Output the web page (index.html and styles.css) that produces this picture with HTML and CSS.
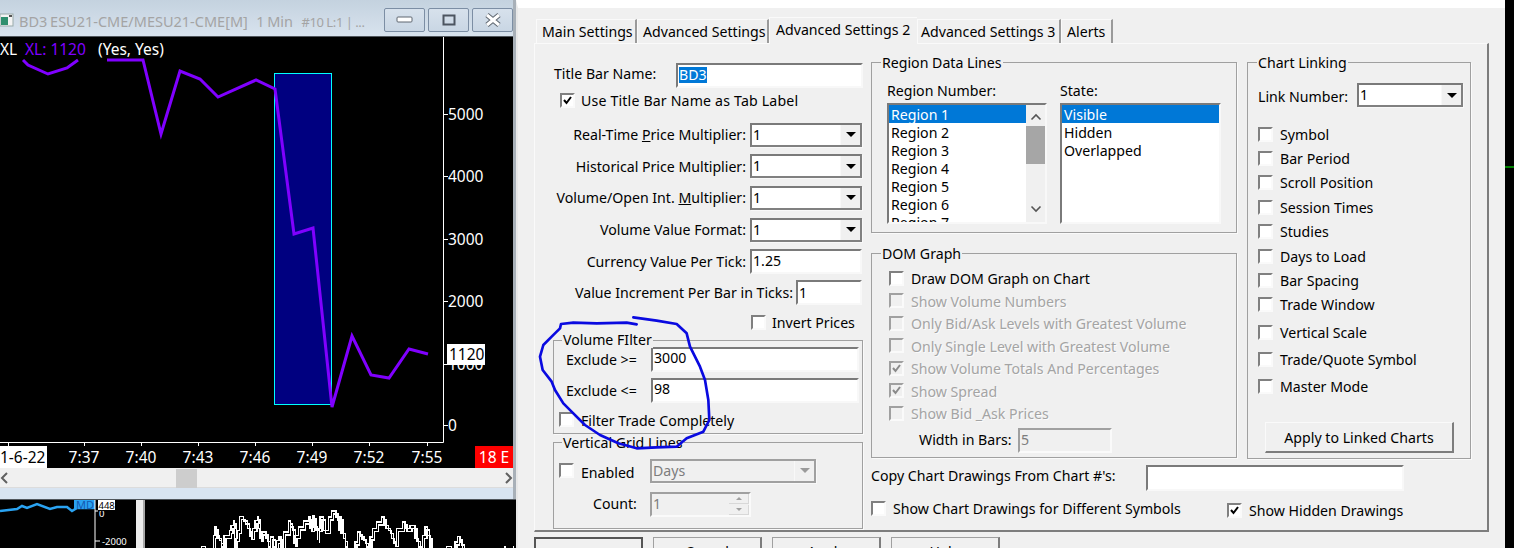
FILE: index.html
```html
<!DOCTYPE html>
<html lang="en">
<head>
<meta charset="utf-8">
<title>Chart Settings</title>
<link rel="stylesheet" href="styles.css">
</head>
<body>
<div class="green-mark"></div>

<section class="win chart-win">
  <header class="titlebar">
    <svg class="app-icon" width="14" height="14" viewBox="0 0 14 14"><rect x="0" y="1" width="13" height="12" fill="#f4f4f4" stroke="#9aa"/><rect x="1" y="4" width="7" height="8" fill="#2f8f6f"/><rect x="9" y="2" width="3" height="2" fill="#555"/></svg>
    <span class="title-text">BD3 ESU21-CME/MESU21-CME[M]&nbsp;&nbsp; 1 Min &nbsp;&nbsp;<span class="title-tail">#10 L:1 | ...</span></span>
    <div class="win-btns">
      <div class="win-btn"><svg width="17" height="8" viewBox="0 0 17 8"><rect x="1" y="1" width="15" height="5" rx="1" fill="#fff" stroke="#5f6770"/></svg></div>
      <div class="win-btn"><svg width="14" height="12" viewBox="0 0 14 12"><rect x="1.5" y="1.5" width="11" height="9" fill="none" stroke="#4c5560" stroke-width="2"/></svg></div>
      <div class="win-btn"><svg width="18" height="14" viewBox="0 0 18 14"><path d="M3 2 L15 12 M15 2 L3 12" stroke="#5f6770" stroke-width="5"/><path d="M3 2 L15 12 M15 2 L3 12" stroke="#fff" stroke-width="3"/></svg></div>
    </div>
  </header>
  <svg class="chart" width="513" height="431" viewBox="0 37 513 431">
    <rect x="274.5" y="73.5" width="57" height="331" fill="#000080" stroke="#00ffff"/>
    <path class="axis" d="M443.5 37 V442.5 H0 M444 114.5 h4 M444 176.5 h4 M444 239.5 h4 M444 301.5 h4 M444 364.5 h4 M444 425.5 h4 M8.5 442 v4 M84.5 442 v4 M141.5 442 v4 M198.5 442 v4 M255.5 442 v4 M312.5 442 v4 M369.5 442 v4 M427.5 442 v4"/>
    <polyline class="plot" points="23,60 28,65 48,74 67,68 78,60"/>
    <polyline class="plot" points="107,60 143,60 161,134 180,71 200,79 218,97 256,80 275,89 294,234 313,228 332,407 352,336 371,375 389,378 409,349 428,354"/>
    <text class="t" x="0" y="55">XL</text>
    <text class="t purple" x="25" y="55">XL: 1120</text>
    <text class="t" x="98" y="55">(Yes, Yes)</text>
    <text class="t" x="448" y="120">5000</text>
    <text class="t" x="448" y="182">4000</text>
    <text class="t" x="448" y="245">3000</text>
    <text class="t" x="448" y="307">2000</text>
    <text class="t" x="448" y="431">0</text>
    <text class="t" x="448" y="370">1000</text>
    <rect x="447" y="344" width="38" height="21" fill="#fff"/>
    <text class="t dark" x="449" y="360">1120</text>
    <rect x="0" y="446" width="47" height="22" fill="#fff"/>
    <text class="t dark" x="0" y="463">1-6-22</text>
    <text class="t" x="84" y="463" text-anchor="middle">7:37</text>
    <text class="t" x="141" y="463" text-anchor="middle">7:40</text>
    <text class="t" x="198" y="463" text-anchor="middle">7:43</text>
    <text class="t" x="255" y="463" text-anchor="middle">7:46</text>
    <text class="t" x="312" y="463" text-anchor="middle">7:49</text>
    <text class="t" x="369" y="463" text-anchor="middle">7:52</text>
    <text class="t" x="427" y="463" text-anchor="middle">7:55</text>
    <rect x="475" y="446" width="38" height="22" fill="#ff0000"/>
    <text class="t" x="494" y="463" text-anchor="middle">18 E</text>
  </svg>
  <div class="hscroll">
    <svg width="10" height="14" viewBox="0 0 10 14"><path d="M7 2 L2 7 L7 12" fill="none" stroke="#606060" stroke-width="2"/></svg>
    <div class="hthumb"></div>
    <svg width="10" height="14" viewBox="0 0 10 14"><path d="M3 2 L8 7 L3 12" fill="none" stroke="#606060" stroke-width="2"/></svg>
  </div>
</section>

<section class="win lower-win">
  <svg width="518" height="49" viewBox="0 0 518 49">
    <rect x="136" y="0" width="9" height="49" fill="#ededed"/>
    <rect x="143" y="0" width="2" height="49" fill="#a8a8a8"/>
    <polyline class="blue-line" points="0,11 17,9 22,6 27,8 37,4 50,9 57,7 67,7 72,11 77,8 94,8"/>
    <rect x="74" y="0" width="21" height="9" fill="#2aa3f2"/>
    <text class="t-sm md" x="76" y="9">MD</text>
    <path class="axis" d="M95 0 V49 M95 41 h5 M95 11 h3"/>
    <text class="t-sm" x="99" y="17">0</text>
    <rect x="98" y="0" width="17" height="10" fill="#fff"/>
    <text class="t-sm dark" x="98.5" y="9">448</text>
    <text class="t-sm" x="102" y="45">-2000</text>
    <g transform="translate(180 -3) scale(.3333)">
      <path id="prices" class="ticks" d="M64 156 V148 H76 V156 M100 156 V115 H105 V90 H108 V115 H118 V130 H125 V150 H132 V115 H148 V100 H153 V85 H160 V72 H163 V150 H165 V125 H172 V100 H178 V58 H190 V72 H203 V95 H210 V118 H218 V95 H225 V70 H232 V60 H235 V95 H240 V125 H245 V105 H258 V125 H265 V150 H272 V120 H280 V150 H290 V130 H297 V118 H303 V150 H310 V105 H325 V72 H332 V90 H340 V140 H345 V115 H355 V90 H370 V72 H385 V60 H390 V95 H398 V55 H402 V90 H412 V130 V95 H420 V60 H430 V100 H445 V60 H455 V42 H468 V60 H475 V100 H480 V58 H485 V100 H490 V125 H497 V150 H503 M525 156 V135 H532 V105 H540 V118 H552 V130 H560 V150 H570 V120 H578 V95 H590 V75 H605 V60 H612 V85 H625 V100 H635 V125 H642 V140 H650 V95 H668 V75 H675 V95 H690 V85 H705 V125 H715 V150 H728 V115 H735 V90 H742 V115 H750 V150 H760 M800 156 V148 H815 V156 M825 156 V135 H833 V118 H840 V135 H848 V156 M975 156 V148 M1000 156 V148"/>
      <use href="#prices" x="6" y="9"/>
    </g>
  </svg>
</section>

<section class="win dialog">
  <nav class="tabs">
    <div class="tab t-main">Main Settings</div>
    <div class="tab t-adv">Advanced Settings</div>
    <div class="tab active t-adv2">Advanced Settings 2</div>
    <div class="tab t-adv3">Advanced Settings 3</div>
    <div class="tab t-alerts">Alerts</div>
  </nav>

  <div class="panel">
    <div class="col-left">
      <div class="row title-row">
        <span class="title-label">Title Bar Name:</span>
        <div class="field title-field"><span class="sel">BD3</span></div>
      </div>
      <div class="row use-row">
        <div class="cb"><svg width="13" height="13" viewBox="0 0 13 13"><path d="M3 6 L5.5 9 L10 3" fill="none" stroke="#000" stroke-width="2"/></svg></div>
        <span>Use Title Bar Name as Tab Label</span>
      </div>
      <div class="mult-rows">
        <div class="row"><span class="rlabel">Real-Time <u>P</u>rice Multiplier:</span><div class="combo w112"><span>1</span><i class="arrow"></i></div></div>
        <div class="row"><span class="rlabel">Historical Price Multiplier:</span><div class="combo w112"><span>1</span><i class="arrow"></i></div></div>
        <div class="row"><span class="rlabel">Volume/Open Int. <u>M</u>ultiplier:</span><div class="combo w112"><span>1</span><i class="arrow"></i></div></div>
        <div class="row"><span class="rlabel">Volume Value Format:</span><div class="combo w112"><span>1</span><i class="arrow"></i></div></div>
        <div class="row"><span class="rlabel">Currency Value Per Tick:</span><div class="field w112">1.25</div></div>
        <div class="row"><span class="rlabel short">Value Increment Per Bar in Ticks:</span><div class="field w66">1</div></div>
      </div>
      <div class="row invert-row"><div class="cb"></div><span>Invert Prices</span></div>

      <div class="group vol-group">
        <span class="legend">Volume FIlter</span>
        <div class="row vrow"><span class="vlabel">Exclude &gt;=</span><div class="field w208"><span class="up-text">3000</span></div></div>
        <div class="row vrow gap6"><span class="vlabel">Exclude &lt;=</span><div class="field w208"><span class="up-text">98</span></div></div>
        <div class="row vcheck"><div class="cb"></div><span>Filter Trade Completely</span></div>
      </div>

      <div class="group grid-group">
        <span class="legend">Vertical Grid Lines</span>
        <div class="row grow1">
          <div class="cb"></div><span class="en-label">Enabled</span>
          <div class="combo disabled w166"><span>Days</span><i class="arrow"></i></div>
        </div>
        <div class="row grow2">
          <span class="count-label">Count:</span>
          <div class="field spin disabled"><span>1</span>
            <div class="spin-btns"><b><i class="up"></i></b><b><i class="down"></i></b></div>
          </div>
        </div>
      </div>
    </div>

    <div class="col-right">
      <div class="top-area">
        <div class="col-mid">
          <div class="group region-group">
            <span class="legend">Region Data Lines</span>
            <div class="list-col">
              <div class="list-title">Region Number:</div>
              <div class="list">
                <div class="items">
                  <div class="item on">Region 1</div>
                  <div class="item">Region 2</div>
                  <div class="item">Region 3</div>
                  <div class="item">Region 4</div>
                  <div class="item">Region 5</div>
                  <div class="item">Region 6</div>
                  <div class="item">Region 7</div>
                </div>
                <div class="vscroll">
                  <svg width="12" height="8" viewBox="0 0 12 8"><path d="M1.5 6.5 L6 2 L10.5 6.5" fill="none" stroke="#555" stroke-width="1.6"/></svg>
                  <div class="vthumb"></div>
                  <svg class="down-ar" width="12" height="8" viewBox="0 0 12 8"><path d="M1.5 1.5 L6 6 L10.5 1.5" fill="none" stroke="#555" stroke-width="1.6"/></svg>
                </div>
              </div>
            </div>
            <div class="list-col">
              <div class="list-title">State:</div>
              <div class="list">
                <div class="items">
                  <div class="item on">Visible</div>
                  <div class="item">Hidden</div>
                  <div class="item">Overlapped</div>
                </div>
              </div>
            </div>
          </div>

          <div class="group dom-group">
            <span class="legend">DOM Graph</span>
            <div class="row drow"><div class="cb"></div><span>Draw DOM Graph on Chart</span></div>
            <div class="row drow off"><div class="cb"></div><span>Show Volume Numbers</span></div>
            <div class="row drow off"><div class="cb"></div><span>Only Bid/Ask Levels with Greatest Volume</span></div>
            <div class="row drow off"><div class="cb"></div><span>Only Single Level with Greatest Volume</span></div>
            <div class="row drow off"><div class="cb"><svg width="13" height="13" viewBox="0 0 13 13"><path d="M3 6 L5.5 9 L10 3" fill="none" stroke="#8a8a8a" stroke-width="2"/></svg></div><span>Show Volume Totals And Percentages</span></div>
            <div class="row drow off"><div class="cb"><svg width="13" height="13" viewBox="0 0 13 13"><path d="M3 6 L5.5 9 L10 3" fill="none" stroke="#8a8a8a" stroke-width="2"/></svg></div><span>Show Spread</span></div>
            <div class="row drow off"><div class="cb"></div><span>Show Bid _Ask Prices</span></div>
            <div class="row width-row"><span class="wb-label">Width in Bars:</span><div class="field disabled w94">5</div></div>
          </div>
        </div>

        <div class="group link-group">
          <span class="legend">Chart Linking</span>
          <div class="row link-row"><span class="link-label">Link Number:</span><div class="combo w106"><span>1</span><i class="arrow"></i></div></div>
          <div class="link-list">
            <div class="row lrow"><div class="cb"></div><span>Symbol</span></div>
            <div class="row lrow"><div class="cb"></div><span>Bar Period</span></div>
            <div class="row lrow"><div class="cb"></div><span>Scroll Position</span></div>
            <div class="row lrow"><div class="cb"></div><span>Session Times</span></div>
            <div class="row lrow"><div class="cb"></div><span>Studies</span></div>
            <div class="row lrow"><div class="cb"></div><span>Days to Load</span></div>
            <div class="row lrow"><div class="cb"></div><span>Bar Spacing</span></div>
            <div class="row lrow"><div class="cb"></div><span>Trade Window</span></div>
            <div class="row lrow2 first"><div class="cb"></div><span>Vertical Scale</span></div>
            <div class="row lrow2"><div class="cb"></div><span>Trade/Quote Symbol</span></div>
            <div class="row lrow2"><div class="cb"></div><span>Master Mode</span></div>
          </div>
          <div class="btn apply">Apply to Linked Charts</div>
        </div>
      </div>

      <div class="row copy-row"><span class="copy-label">Copy Chart Drawings From Chart #'s:</span><div class="field w258"></div></div>
      <div class="row draw-row">
        <div class="draw-a"><div class="cb"></div><span>Show Chart Drawings for Different Symbols</span></div>
        <div class="draw-b"><div class="cb"><svg width="13" height="13" viewBox="0 0 13 13"><path d="M3 6 L5.5 9 L10 3" fill="none" stroke="#000" stroke-width="2"/></svg></div><span>Show Hidden Drawings</span></div>
      </div>
    </div>
  </div>

  <div class="actions">
    <div class="btn dflt">OK</div>
    <div class="btn">Cancel</div>
    <div class="btn">Apply</div>
    <div class="btn">Help</div>
  </div>
</section>

<svg class="scribble" width="340" height="248" viewBox="0 0 1020 744">
  <path d="M320 73 L290 68 L200 70 L130 68 L93 72 L90 85 L65 110 L40 135 L30 170 L38 210 L65 245 L75 270 L100 310 L130 340 L165 375 L210 405 L265 430 L320 445 L380 442 L440 440 L470 415 L520 395 L538 360 L535 300 L525 240 L510 200 L480 140 L470 100 L440 72 L380 62 L310 52"/>
</svg>
</body>
</html>
```

FILE: styles.css
```css
* { box-sizing: border-box; }
html, body { margin: 0; height: 100%; }
body {
  width: 1514px; height: 548px; overflow: hidden; position: relative;
  background: #000; color: #000;
  font: 14.15px/1 "Noto Sans", "Open Sans", sans-serif;
}
.green-mark { position: absolute; left: 1505px; top: 166px; width: 9px; height: 2px; background: #008000; }
.win { position: absolute; }

/* chart window */
.chart-win { left: 0; top: 0; width: 516px; height: 499px; background: #d8e4f1; border-right: 3px solid #a8b0b8; display: flex; flex-direction: column; }
.titlebar { height: 37px; flex: none; display: flex; align-items: center; background: linear-gradient(#c4d2df, #d8e3ee); border-bottom: 1px solid #50565c; }
.app-icon { margin: 4px 5px 0 0; flex: none; }
.title-text { color: #a4a4a4; font-size: 14.5px; word-spacing: -1px; white-space: nowrap; width: 365px; padding-top: 7px; }
.title-tail { font-size: 13px; word-spacing: -.5px; letter-spacing: -.3px; }
.win-btns { display: flex; gap: 3px; margin: 4px 0 0 0; }
.win-btn { width: 41px; height: 24px; border: 1px solid #7c8ea4; border-radius: 2px; background: linear-gradient(#d7e1ec, #c9d6e4); display: flex; align-items: center; justify-content: center; }
.chart { display: block; background: #000; flex: none; }
.t { font: 15.5px "Noto Sans", "Open Sans", sans-serif; fill: #fff; }
.t.purple { fill: #8000ff; }
.dark { fill: #000; }
.t-sm { font: 9.5px "Noto Sans", sans-serif; fill: #fff; }
.t-sm.dark { fill: #000; text-decoration: underline; }
.t-sm.md { fill: #1559b0; font-size: 11px; }
.axis { fill: none; stroke: #fff; stroke-width: 1; }
.plot { fill: none; stroke: #8000ff; stroke-width: 3; stroke-linejoin: miter; }
.hscroll { height: 20px; flex: none; background: #f0f0f0; border-bottom: 1px solid #dcdcdc; display: flex; align-items: center; justify-content: space-between; position: relative; }
.hthumb { position: absolute; left: 176px; top: 1px; width: 21px; height: 19px; background: #cdcdcd; }

.lower-win { left: 0; top: 499px; width: 518px; height: 49px; background: #000; border-top: 1px solid #50565c; }
.lower-win svg { display: block; }
.blue-line { fill: none; stroke: #2aa3f2; stroke-width: 2.5; }
.ticks { fill: none; stroke: #fff; stroke-width: 4; shape-rendering: crispEdges; }

/* dialog */
.dialog { left: 516px; top: 0; width: 989px; height: 548px; background: #f0f0f0; border-top: 8px solid #fff; padding: 9px 0 0 18px; overflow: hidden; border-left: 2px solid #e8e8e8; }
.tabs { display: flex; height: 26px; align-items: flex-end; }
.tab { height: 24px; padding: 5px 0 0 5px; border-top: 1px solid #fafafa; border-left: 1px solid #fafafa; border-right: 2px solid #9a9a9a; white-space: nowrap; }
.tab.active { height: 27px; margin-bottom: -1px; background: #f0f0f0; position: relative; z-index: 2; padding: 5px 0 0 6px; border-right: 0; }
.t-main { width: 101px; }
.t-adv { width: 132px; }
.t-adv2 { width: 148px; }
.t-adv3 { width: 144px; padding-left: 3px; }
.t-alerts { width: 52px; }

.panel { margin-left: -2px; width: 955px; height: 489px; border: solid #fafafa; border-width: 1px 2px 2px 1px; border-right-color: #7d7d7d; border-bottom-color: #7d7d7d; padding: 18px 0 0 17px; display: flex; gap: 8px; }
.row { display: flex; align-items: center; white-space: nowrap; }

.col-left { width: 311px; flex: none; }
.title-row { height: 26px; padding-left: 2px; }
.title-label { width: 122px; padding-bottom: 2px; }
.title-field { width: 187px; height: 26px; padding-bottom: 3px; }
.sel { background: #0078d7; color: #fff; padding: 1px 0; }
.use-row { height: 24px; padding-left: 8px; letter-spacing: .17px; }
.use-row span, .invert-row span, .drow span, .lrow2 span, .draw-a span, .draw-b span { padding-top: 2px; }
.use-row .cb, .invert-row .cb { margin-right: 6px; }
.mult-rows { margin-top: 7px; display: grid; grid-auto-rows: 31.6px; }
.rlabel { width: 194px; text-align: right; margin-right: 4px; padding-top: 1px; }
.rlabel.short { width: 241px; margin-right: 3px; }
.invert-row { height: 28px; padding-left: 199px; }
.field { height: 25px; background: #fff; border: 2px solid; border-color: #7a7a7a #f8f8f8 #f8f8f8 #7a7a7a; padding: 0 0 0 1px; display: flex; align-items: center; }
.up-text { margin-bottom: 2px; }
.w112 { width: 112px; }
.w66 { width: 66px; }
.w208 { width: 208px; }
.w94 { width: 94px; }
.w258 { width: 258px; }
.w166 { width: 166px; }
.w106 { width: 106px; }
.combo { height: 24px; background: #fff; border: 2px solid; border-color: #7a7a7a; border-right-color: #808080; border-bottom-color: #808080; padding-left: 1px; display: flex; align-items: center; justify-content: space-between; box-shadow: 1px 1px 0 #f8f8f8; }
.arrow { width: 20px; height: 20px; background: #f0f0f0; display: flex; align-items: center; justify-content: center; border-left: 1px solid #f8f8f8; }
.arrow::after { content: ""; border: solid transparent; border-width: 5px 5px 0; border-top-color: #000; }
.combo.disabled { background: #f0f0f0; color: #7d7d7d; border-color: #a0a0a0; padding-top: 2px; }
.combo.disabled .arrow { margin-top: -2px; }
.combo.disabled .arrow::after { border-top-color: #9a9a9a; }
.field.disabled { background: #f0f0f0; color: #7d7d7d; border-color: #a0a0a0 #fafafa #fafafa #a0a0a0; }

.cb { width: 15px; height: 15px; flex: none; background: #fff; border: 2px solid; border-color: #808080 #fafafa #fafafa #808080; display: flex; align-items: center; justify-content: center; }
.cb svg { flex: none; margin: -1px; }
.off { color: #a4a4a4; text-shadow: 1px 1px 0 #fbfbfb; }
.off .cb { background: #f0f0f0; border-color: #a0a0a0 #fafafa #fafafa #a0a0a0; }

.group { position: relative; border: 1px solid #a0a0a0; box-shadow: 1px 1px 0 #fafafa; }
.legend { position: absolute; left: 8px; top: -9px; background: #f0f0f0; padding: 0 1px; line-height: 17px; }
.col-mid .legend, .link-group .legend { left: 9px; }

.vol-group { margin: 3px 0 0 1px; width: 310px; height: 94px; padding: 6px 0 0 5px; }
.vol-group .legend { top: -10px; }
.vrow { height: 25px; padding-left: 7px; }
.vlabel { width: 85px; padding-top: 2px; }
.gap6 { margin-top: 6px; }
.vcheck { height: 26px; margin-top: 4px; }
.vcheck span { padding-top: 4px; }
.vcheck .cb { margin-right: 7px; }
.grid-group { margin: 8px 0 0 1px; width: 310px; height: 87px; padding: 16px 0 0 5px; }
.grow1 { height: 24px; }
.grow1 .cb { margin-right: 7px; }
.en-label { width: 69px; padding-top: 6px; }
.grow2 { height: 25px; margin-top: 9px; }
.count-label { width: 57px; margin-left: 34px; }
.spin { width: 101px; justify-content: space-between; padding-right: 0; }
.spin-btns { display: flex; flex-direction: column; gap: 1px; width: 20px; }
.spin-btns b { height: 10px; background: #f0f0f0; border: solid #d8d8d8; border-width: 0 1px 1px 0; display: flex; align-items: center; justify-content: center; }
.spin-btns .up { border: solid transparent; border-width: 0 3px 3px; border-bottom-color: #a0a0a0; }
.spin-btns .down { border: solid transparent; border-width: 3px 3px 0; border-top-color: #a0a0a0; }

.col-right { flex: none; width: 600px; }
.top-area { display: flex; gap: 10px; align-items: flex-start; }
.col-mid { width: 366px; flex: none; }
.region-group { height: 171px; padding: 17px 0 0 15px; display: flex; gap: 13px; }
.list-col { width: 160px; }
.list-title { height: 20px; line-height: 22px; margin-bottom: 3px; }
.list { height: 121px; width: 160px; background: #fff; border: 2px solid; border-color: #7a7a7a #f8f8f8 #f8f8f8 #7a7a7a; display: flex; overflow: hidden; }
.list-col + .list-col .list { width: 161px; }
.items { flex: 1; overflow: hidden; }
.item { height: 18px; line-height: 20px; padding-left: 2px; }
.item.on { background: #0078d7; color: #fff; }
.vscroll { width: 19px; flex: none; background: #f0f0f0; display: flex; flex-direction: column; align-items: center; padding-top: 8px; }
.vthumb { width: 19px; height: 38px; background: #a6a6a6; margin-top: 5px; }
.down-ar { margin-top: 41px; }

.dom-group { margin-top: 20px; height: 205px; padding: 13px 0 0 17px; }
.drow { height: 22.5px; }
.drow .cb { margin-right: 7px; }
.width-row { height: 25px; margin-top: 3.5px; padding-left: 30px; }
.wb-label { width: 99px; }

.link-group { width: 224px; height: 397px; padding: 20px 0 0 10px; }
.link-row { height: 24px; }
.link-label { width: 99px; padding-top: 5px; }
.link-list { margin-top: 15px; }
.lrow { height: 24.4px; }
.lrow span { padding-top: 1px; }
.lrow2 { height: 27px; }
.lrow2 span { padding-top: 1px; }
.lrow2.first { margin-top: 1.5px; }
.lrow .cb, .lrow2 .cb { margin-right: 7px; }
.btn { height: 31px; display: flex; align-items: center; justify-content: center; background: #f0f0f0; border: 1px solid #fafafa; border-right: 2px solid #7d7d7d; border-bottom: 2px solid #7d7d7d; }
.apply { width: 189px; margin: 22px 0 0 7px; padding-top: 2px; }

.copy-row { height: 26px; margin-top: 6px; }
.copy-label { width: 275px; padding-bottom: 4px; }
.copy-row .field { height: 26px; }
.draw-row { height: 24px; margin-top: 5px; align-items: flex-start; }
.draw-a, .draw-b { display: flex; align-items: center; height: 24px; }
.draw-a { width: 356px; }
.draw-b { margin-top: 2px; }
.draw-a .cb, .draw-b .cb { margin-right: 7px; }

.actions { margin: 5px 0 0 -2px; display: flex; gap: 10px; }
.actions .btn { width: 109px; align-items: flex-start; padding-top: 7px; border-top: 1px solid #a0a0a0; border-left: 1px solid #a0a0a0; }
.actions .dflt { border: 2px solid #555; }

.scribble { position: absolute; left: 530px; top: 300px; }
.scribble path { fill: none; stroke: #0a0ae0; stroke-width: 8; stroke-linejoin: round; stroke-linecap: round; }
```
